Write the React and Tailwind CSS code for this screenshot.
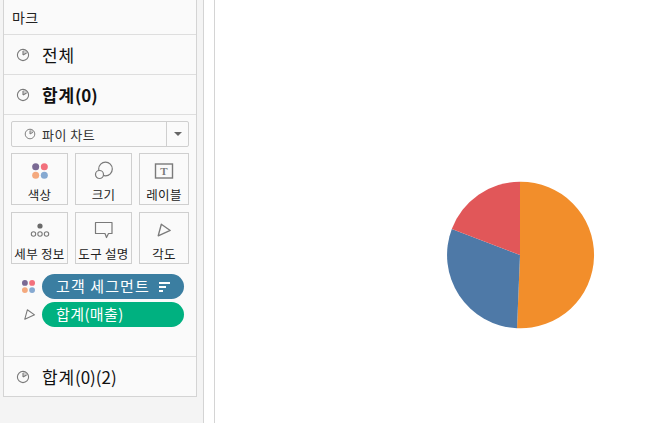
const F = '"Noto Sans CJK KR","Liberation Sans",sans-serif';

function Clock({ className = "", size = 14 }) {
  return (
    <svg width={size} height={size} viewBox="0 0 14 14" fill="none" stroke="#7a7a7a" strokeWidth="1.1" className={className}>
      <path d="M7 7L7 1.5A5.5 5.5 0 0 1 11.8 4.3Z" fill="#cfcfcf" stroke="none" />
      <circle cx="7" cy="7" r="5.6" />
      <path d="M7 7V3M7 7L10.6 5" />
    </svg>
  );
}

function Dots({ size = 20 }) {
  return (
    <svg width={size} height={size} viewBox="0 0 20 20">
      <circle cx="5.2" cy="5.2" r="3.9" fill="#7a6a94" />
      <circle cx="14.8" cy="5.2" r="3.9" fill="#f2707c" />
      <circle cx="5.2" cy="14.8" r="3.9" fill="#f4a97e" />
      <circle cx="14.8" cy="14.8" r="3.9" fill="#86a9d1" />
    </svg>
  );
}

function Angle({ size = 18 }) {
  return (
    <svg width={size} height={size} viewBox="0 0 18 18" fill="none" stroke="#7a7a7a" strokeWidth="1.5" strokeLinejoin="round">
      <path d="M2.5 15.5L6 2.5L16 9.5Z" />
    </svg>
  );
}

function Row({ children, latin, bold, last }) {
  return (
    <div className={`flex items-center shrink-0 pl-[12px] ${last ? "h-[39px]" : "h-[40px] border-b border-[#dedede]"}`}>
      <Clock className="shrink-0 mr-[12px]" />
      <span className={`text-[17px] leading-none text-[#111] whitespace-nowrap ${bold ? "font-bold" : ""}`}>
        <span className="tracking-[0.8px]">{children}</span>
        {latin}
      </span>
    </div>
  );
}

function Card({ icon, label, w }) {
  return (
    <div className={`${w} h-[52px] border border-[#cfcfcf] flex flex-col items-center`}>
      <div className="h-[33px] w-full flex items-center justify-center">{icon}</div>
      <span className="text-[12.5px] leading-none mt-[2px] text-[#222] whitespace-nowrap tracking-[0.3px]">{label}</span>
    </div>
  );
}

export default function App() {
  return (
    <div className="flex h-[423px] w-[645px] overflow-hidden bg-white" style={{ fontFamily: F }}>
      <div className="w-[204px] h-full bg-[#f4f4f4] border-r border-[#d4d4d4] pl-[3px] shrink-0">
        <div className="w-[194px] h-[397px] bg-[#fafafa] border-l border-r border-b border-[#d4d4d4] flex flex-col">
          <div className="h-[35px] shrink-0 border-b border-[#dedede] pl-[8px] flex items-center text-[14px] leading-none text-[#222] tracking-[0.4px]">마크</div>
          <Row>전체</Row>
          <Row bold latin="(0)">합계</Row>
          <div className="h-[242px] shrink-0 border-b border-[#dedede] px-[7px] pt-[6px]">
            <div className="h-[26px] w-[178px] border border-[#cfcfcf] rounded-[2px] flex items-center bg-[#fafafa]">
              <div className="flex-1 flex items-center pl-[12px] gap-[6px] text-[13px] leading-none text-[#333] tracking-[0.5px]">
                <Clock size={12} />
                <span>파이 차트</span>
              </div>
              <div className="w-[22px] h-full border-l border-[#cfcfcf] flex items-center justify-center">
                <div className="w-0 h-0 border-l-[4px] border-r-[4px] border-t-[4px] border-l-transparent border-r-transparent border-t-[#666]" />
              </div>
            </div>
            <div className="mt-[6px] flex gap-[7px]">
              <Card w="w-[57px]" label="색상" icon={<Dots size={18} />} />
              <Card w="w-[57px]" label="크기" icon={
                <svg width="20" height="20" viewBox="0 0 20 20" fill="none" stroke="#7a7a7a" strokeWidth="1.2">
                  <circle cx="11.5" cy="8" r="6.8" />
                  <circle cx="5.5" cy="13.5" r="4" fill="#fafafa" />
                </svg>} />
              <Card w="w-[50px]" label="레이블" icon={
                <svg width="20" height="18" viewBox="0 0 20 18" fill="none">
                  <rect x="1.5" y="2" width="17" height="14" stroke="#7a7a7a" strokeWidth="1.4" />
                  <text x="10" y="13" textAnchor="middle" fontSize="11" fontWeight="700" fill="#7a7a7a" fontFamily="Liberation Serif">T</text>
                </svg>} />
            </div>
            <div className="mt-[7px] flex gap-[7px]">
              <Card w="w-[57px]" label="세부 정보" icon={
                <svg width="20" height="20" viewBox="0 0 20 20" fill="none" stroke="#7a7a7a" strokeWidth="1.1">
                  <circle cx="10" cy="6" r="2.6" fill="#6a6a6a" stroke="none" />
                  <circle cx="3.5" cy="14" r="2.2" />
                  <circle cx="10" cy="14" r="2.2" />
                  <circle cx="16.5" cy="14" r="2.2" />
                </svg>} />
              <Card w="w-[57px]" label="도구 설명" icon={
                <svg width="20" height="18" viewBox="0 0 20 18" fill="none" stroke="#7a7a7a" strokeWidth="1.2" strokeLinejoin="round">
                  <path d="M1.5 1.5H18V12.5H14.5L12.5 16.5L11 12.5H1.5Z" />
                </svg>} />
              <Card w="w-[50px]" label="각도" icon={<Angle size={16} />} />
            </div>
            <div className="mt-[10px] flex flex-col gap-[3px]">
              <div className="flex items-center">
                <div className="w-[31px] pl-[10px] shrink-0"><Dots size={15} /></div>
                <div className="w-[142px] h-[25px] rounded-full bg-[#3b7ea1] text-white text-[15px] leading-none flex items-center pl-[14px] pb-[2px]">
                  <span className="whitespace-nowrap tracking-[1.1px]">고객 세그먼트</span>
                  <svg width="12" height="10" viewBox="0 0 12 10" className="ml-[9px] mt-[2px]" fill="#fff">
                    <rect x="0" y="0" width="11" height="2" />
                    <rect x="0" y="4" width="7" height="2" />
                    <rect x="0" y="8" width="4" height="2" />
                  </svg>
                </div>
              </div>
              <div className="flex items-center">
                <div className="w-[31px] pl-[12px] shrink-0"><Angle size={13} /></div>
                <div className="w-[142px] h-[25px] rounded-full bg-[#00b180] text-white text-[15px] leading-none flex items-center pl-[14px] pb-[2px] tracking-[0.4px]">합계(매출)</div>
              </div>
            </div>
          </div>
          <Row last latin="(0)(2)">합계</Row>
        </div>
      </div>
      <div className="w-[11px] h-full bg-white border-r border-[#d4d4d4] shrink-0" />
      <div className="flex-1 h-full relative">
        <svg width="150" height="150" viewBox="0 0 150 150" className="absolute left-[230px] top-[180px]">
          <path d="M75 75L75 1.7A73.3 73.3 0 1 1 72 148.2Z" fill="#f28e2b" />
          <path d="M75 75L72 148.2A73.3 73.3 0 0 1 6.8 49Z" fill="#4e79a7" />
          <path d="M75 75L6.8 49A73.3 73.3 0 0 1 75 1.7Z" fill="#e15759" />
        </svg>
      </div>
    </div>
  );
}
